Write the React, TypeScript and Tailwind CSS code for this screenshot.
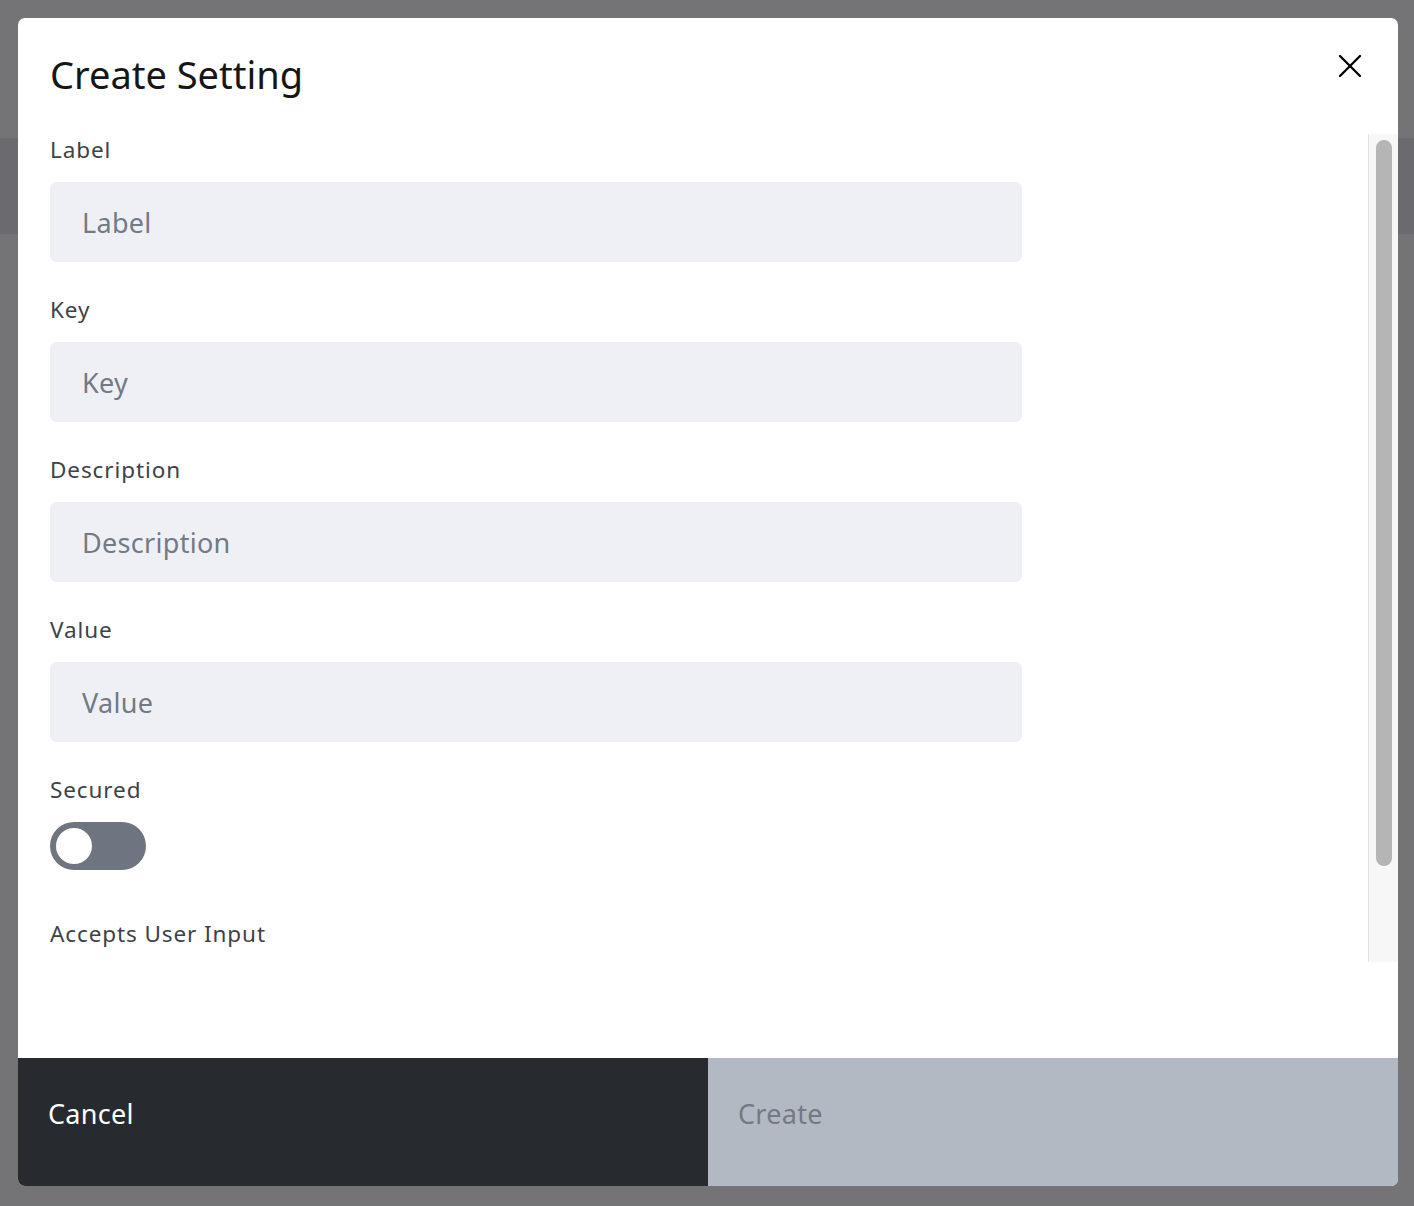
import { X } from "lucide-react";

const fields = ["Label", "Key", "Description", "Value"];

const Field = ({ name }: { name: string }) => {
  return (
    <div className="flex flex-col">
      <label className="text-[22.5px] leading-[32px] text-[#3d4249] tracking-[0.9px]">{name}</label>
      <input
        placeholder={name}
        className="mt-[16px] h-[80px] w-[972px] rounded-[6px] bg-[#eff0f5] px-[32px] text-[27px] tracking-[0.3px] text-[#1f2329] placeholder:text-[#727a85] outline-none"
      />
    </div>
  );
};

export default function App() {
  return (
    <div
      className="relative h-[1206px] w-full overflow-hidden bg-[#747476]"
      style={{ fontFamily: '"Noto Sans", "Open Sans", sans-serif' }}
    >
      <div className="mt-[138px] h-[96px] w-full bg-[#6b6b6f]" />

      <div className="absolute left-[18px] top-[18px] flex h-[1168px] w-[1380px] flex-col overflow-hidden rounded-[7px] bg-white">
        <div className="flex h-[116px] shrink-0 items-start justify-between pl-[32px] pr-[28px]">
          <h1 className="mt-[32px] text-[38px] leading-[48px] text-[#161616]">Create Setting</h1>
          <button className="mt-[28px] text-black" aria-label="close">
            <X size={40} strokeWidth={1.4} />
          </button>
        </div>

        <div className="flex h-[828px] shrink-0">
          <div className="flex-1 overflow-hidden pl-[32px]">
            <div className="flex flex-col gap-[32px]">
              {fields.map((f) => (
                <Field key={f} name={f} />
              ))}
              <div className="flex flex-col">
                <span className="text-[22.5px] leading-[32px] text-[#3d4249] tracking-[0.9px]">Secured</span>
                <div className="mt-[16px] flex h-[48px] w-[96px] items-center rounded-full bg-[#6f7580] px-[6px]">
                  <div className="h-[36px] w-[36px] rounded-full bg-white" />
                </div>
              </div>
              <span className="mt-[16px] text-[22.5px] leading-[32px] text-[#3d4249] tracking-[0.9px]">Accepts User Input</span>
            </div>
          </div>
          <div className="flex w-[30px] justify-center border-l border-[#e3e3e3] bg-[#f7f7f7] pt-[6px]">
            <div className="h-[726px] w-[16px] rounded-full bg-[#b5b5b5]" />
          </div>
        </div>

        <div className="flex-1" />

        <div className="flex h-[128px] shrink-0">
          <button className="flex flex-1 items-start bg-[#272b30] pl-[30px] pt-[38px] text-left text-[27px] leading-[36px] tracking-[0.3px] text-white">
            Cancel
          </button>
          <button className="flex flex-1 items-start bg-[#b3b9c2] pl-[30px] pt-[38px] text-left text-[27px] leading-[36px] tracking-[0.3px] text-[#727a85]">
            Create
          </button>
        </div>
      </div>
    </div>
  );
}
